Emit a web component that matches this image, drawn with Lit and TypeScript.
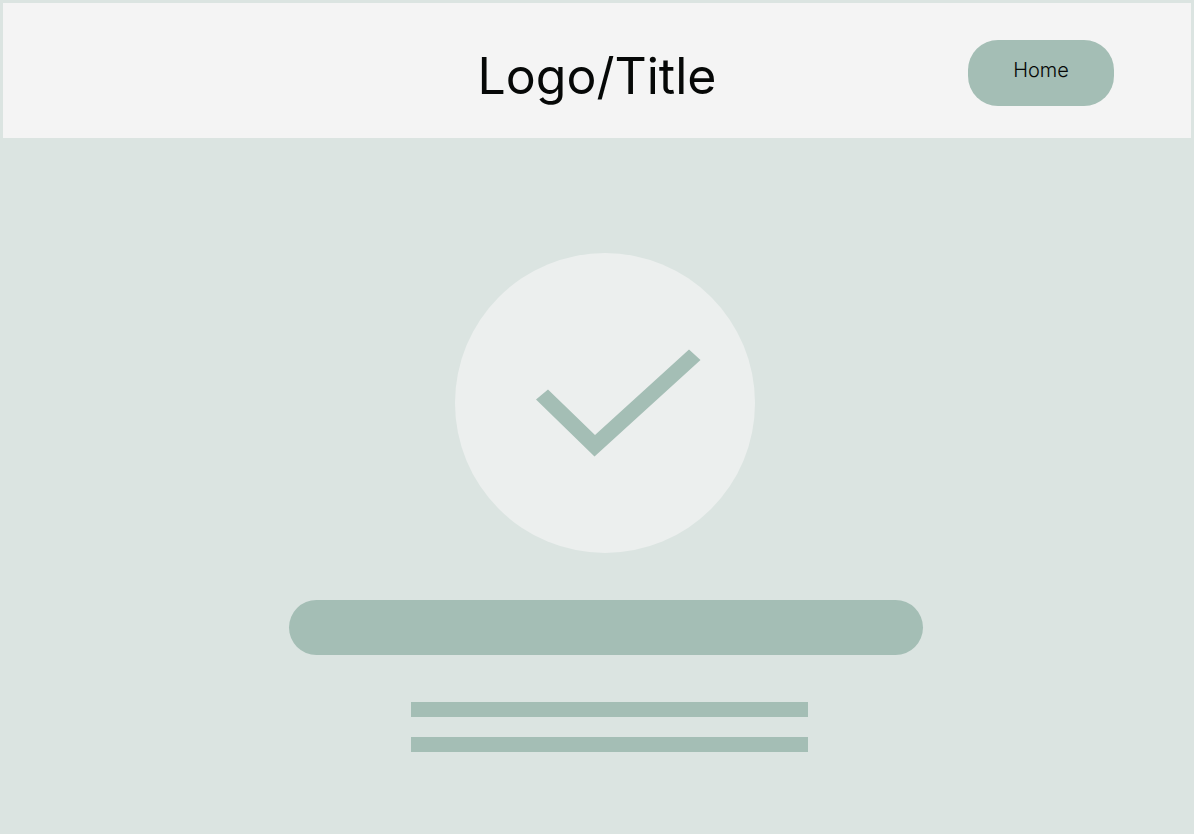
import { LitElement, html, css } from "lit";
import { customElement } from "lit/decorators.js";

@customElement("app-header")
class AppHeader extends LitElement {
  static styles = css`
    :host {
      display: block;
    }
    .bar {
      display: grid;
      grid-template-columns: 1fr auto 1fr;
      align-items: start;
      padding: 37px 77px 26px;
      background: #f4f4f4;
    }
    .title {
      grid-column: 2;
      margin: 0;
      font-size: 50px;
      line-height: 72px;
      font-weight: 400;
      font-optical-sizing: none;
      color: #060807;
    }
    .home {
      justify-self: end;
      box-sizing: border-box;
      width: 146px;
      height: 66px;
      padding: 0 0 6px;
      border: 0;
      border-radius: 30px;
      background: #a4beb5;
      color: #060807;
      font: inherit;
      font-size: 20px;
      font-weight: 300;
      line-height: 24px;
      cursor: pointer;
    }
  `;

  render() {
    return html`
      <header class="bar">
        <h1 class="title">Logo/Title</h1>
        <button class="home" type="button">Home</button>
      </header>
    `;
  }
}

@customElement("app-confirmation")
class AppConfirmation extends LitElement {
  static styles = css`
    :host {
      display: block;
    }
    .content {
      display: flex;
      flex-direction: column;
      align-items: center;
      gap: 47px;
      padding: 115px 0 82px 16px;
    }
    .mark {
      display: block;
      width: 300px;
      height: 300px;
    }
    .disc {
      fill: #ecefee;
    }
    .check {
      fill: #a4beb5;
    }
    .banner {
      width: 634px;
      max-width: 100%;
      height: 55px;
      margin-left: 2px;
      border-radius: 28px;
      background: #a4beb5;
    }
    .lines {
      display: flex;
      flex-direction: column;
      gap: 20px;
      width: 397px;
      max-width: 100%;
      margin-left: 9px;
    }
    .line {
      height: 15px;
      background: #a4beb5;
    }
  `;

  render() {
    return html`
      <main class="content">
        <svg class="mark" viewBox="0 0 300 300" role="img" aria-label="Success">
          <circle class="disc" cx="150" cy="150" r="150" />
          <path class="check" d="M81 146.500 93 136.500 140 182 234 96.500 245.500 107 139.500 203.500Z" />
        </svg>
        <div class="banner"></div>
        <div class="lines">
          <div class="line"></div>
          <div class="line"></div>
        </div>
      </main>
    `;
  }
}

@customElement("app-root")
class AppRoot extends LitElement {
  static styles = css`
    :host {
      display: block;
      box-sizing: border-box;
      min-height: 100vh;
      padding: 3px 3px 0;
      background: #dbe4e1;
      font-family: Inter, "Liberation Sans", sans-serif;
    }
  `;

  render() {
    return html`
      <app-header></app-header>
      <app-confirmation></app-confirmation>
    `;
  }
}
